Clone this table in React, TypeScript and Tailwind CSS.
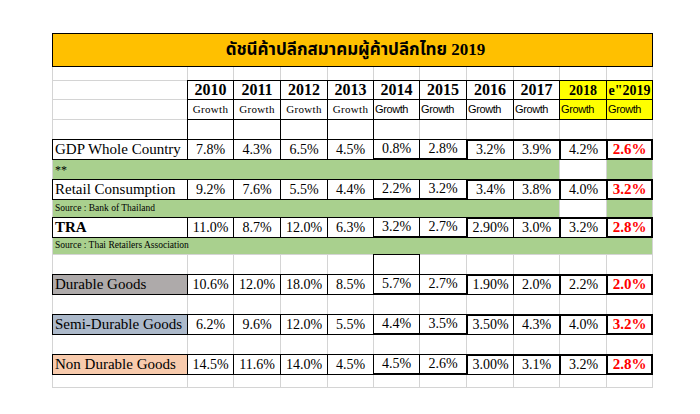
import clsx from "clsx";

const years = ["2010", "2011", "2012", "2013", "2014", "2015", "2016", "2017", "2018", "e\"2019"];

const rows = {
  gdp: ["7.8%", "4.3%", "6.5%", "4.5%", "0.8%", "2.8%", "3.2%", "3.9%", "4.2%", "2.6%"],
  retail: ["9.2%", "7.6%", "5.5%", "4.4%", "2.2%", "3.2%", "3.4%", "3.8%", "4.0%", "3.2%"],
  tra: ["11.0%", "8.7%", "12.0%", "6.3%", "3.2%", "2.7%", "2.90%", "3.0%", "3.2%", "2.8%"],
  durable: ["10.6%", "12.0%", "18.0%", "8.5%", "5.7%", "2.7%", "1.90%", "2.0%", "2.2%", "2.0%"],
  semi: ["6.2%", "9.6%", "12.0%", "5.5%", "4.4%", "3.5%", "3.50%", "4.3%", "4.0%", "3.2%"],
  nonDurable: ["14.5%", "11.6%", "14.0%", "4.5%", "4.5%", "2.6%", "3.00%", "3.1%", "3.2%", "2.8%"],
};

const line = "outline outline-black";

// extra inner borders that make the heavier lines around 2016-2019
const heavy = [
  "",
  "",
  "",
  "",
  "border-b border-black",
  "border-b border-black",
  "border-l border-t border-black",
  "border-t border-black",
  "border-l border-t border-black",
  "border border-black bg-[#ffff00] font-bold text-[#ff0000] text-[15px]",
];

const Cell: React.FC<{ className?: string; children?: React.ReactNode }> = ({ className, children }) => (
  <div className={clsx("flex min-w-0 overflow-hidden whitespace-nowrap", className ?? "bg-white")}>{children}</div>
);

const EmptyRow: React.FC<{ boxed?: number[] }> = ({ boxed = [] }) => (
  <>
    <Cell />
    {years.map((y, i) => (
      <Cell key={y} className={clsx("bg-white", boxed.includes(i) && line)} />
    ))}
  </>
);

const DataRow: React.FC<{ label: string; values: string[]; labelClass?: string }> = ({ label, values, labelClass }) => (
  <>
    <Cell className={clsx("items-center pl-[2px] text-[15px] leading-none", line, labelClass ?? "bg-white")}>
      {label}
    </Cell>
    {values.map((v, i) => (
      <Cell
        key={i}
        className={clsx("items-center justify-center bg-white text-[14px] leading-none", line, heavy[i])}
      >
        {v}
      </Cell>
    ))}
  </>
);

const NoteRow: React.FC<{ text: string; small?: boolean }> = ({ text, small }) => (
  <>
    <div
      className={clsx(
        "col-span-9 flex items-center bg-[#a9d08e] pl-[2px] leading-none",
        small ? "text-[9.5px]" : "text-[12px]"
      )}
    >
      {text}
    </div>
    <Cell />
    <Cell className="bg-[#a9d08e]" />
  </>
);

export default function App() {
  return (
    <div className="min-h-[414px] bg-white pl-[52px] pt-[33px] font-['Liberation_Serif',serif] text-black">
      <div className="grid w-fit grid-cols-[134px_45px_46px_46px_45px_45px_46px_46px_45px_46px_45px] grid-rows-[32px_13px_18px_19px_19px_19px_19px_19px_17px_19px_16px_19px_19px_19px_19px_19px_19px_12px] gap-px bg-[#d4d4d4] p-px">
        <div
          className={clsx(
            "col-span-11 flex items-center justify-center bg-[#ffc000] pl-[6px] text-[17px] font-bold",
            "font-['Liberation_Serif','Noto_Sans_Thai','Noto_Serif_Thai',serif]",
            line
          )}
        >
          ดัชนีค้าปลีกสมาคมผู้ค้าปลีกไทย 2019
        </div>

        <EmptyRow />

        <Cell />
        {years.map((y, i) => (
          <Cell
            key={y}
            className={clsx(
              "justify-center font-bold leading-none",
              line,
              i < 8 ? "items-center bg-white text-[16px]" : "items-end bg-[#ffff00] pb-[1px] text-[14px]"
            )}
          >
            {y}
          </Cell>
        ))}

        <Cell />
        {years.map((y, i) => (
          <Cell
            key={y}
            className={clsx(
              "items-center leading-none",
              line,
              i < 4
                ? "justify-center bg-white text-[11px] tracking-[0.3px]"
                : "pl-px font-['Liberation_Sans',Arial,sans-serif] text-[11px] tracking-[-0.4px]",
              i >= 4 && (i < 8 ? "bg-white" : "bg-[#ffff00]")
            )}
          >
            Growth
          </Cell>
        ))}

        <EmptyRow boxed={[0, 1, 2, 3]} />

        <DataRow label="GDP Whole Country" values={rows.gdp} />
        <NoteRow text="**" />
        <DataRow label="Retail Consumption" values={rows.retail} />
        <NoteRow text="Source : Bank of Thailand" small />
        <DataRow label="TRA" values={rows.tra} labelClass="bg-white font-bold" />
        <div className="col-span-11 flex items-center bg-[#a9d08e] pl-[2px] text-[9.5px] leading-none">
          Source : Thai Retailers Association
        </div>

        <EmptyRow boxed={[4]} />
        <DataRow label="Durable Goods" values={rows.durable} labelClass="bg-[#aeaaaa]" />
        <EmptyRow />
        <DataRow label="Semi-Durable Goods" values={rows.semi} labelClass="bg-[#acb9ca]" />
        <EmptyRow />
        <DataRow label="Non Durable Goods" values={rows.nonDurable} labelClass="bg-[#f8cbad]" />
        <EmptyRow />
      </div>
    </div>
  );
}
